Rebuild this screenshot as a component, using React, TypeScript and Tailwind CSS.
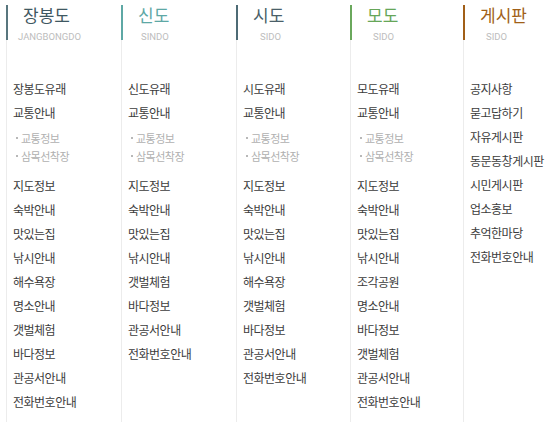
import React from 'react';

type Column = {
  title: string;
  sub: string;
  titleClass: string;
  borderClass: string;
  subPad: string;
  width: string;
  top: string[];
  rest: string[];
};

const columns: Column[] = [
  {
    title: '장봉도',
    sub: 'JANGBONGDO',
    titleClass: 'text-[#3f5862]',
    borderClass: 'border-[#58767e]',
    subPad: 'pl-[10px]',
    width: 'w-[115px]',
    top: ['장봉도유래', '교통안내'],
    rest: ['지도정보', '숙박안내', '맛있는집', '낚시안내', '해수욕장', '명소안내', '갯벌체험', '바다정보', '관공서안내', '전화번호안내'],
  },
  {
    title: '신도',
    sub: 'SINDO',
    titleClass: 'text-[#5ea8a5]',
    borderClass: 'border-[#5ea8a5]',
    subPad: 'pl-[18px]',
    width: 'w-[115px]',
    top: ['신도유래', '교통안내'],
    rest: ['지도정보', '숙박안내', '맛있는집', '낚시안내', '갯벌체험', '바다정보', '관공서안내', '전화번호안내'],
  },
  {
    title: '시도',
    sub: 'SIDO',
    titleClass: 'text-[#4a5f69]',
    borderClass: 'border-[#4d6b75]',
    subPad: 'pl-[22px]',
    width: 'w-[114px]',
    top: ['시도유래', '교통안내'],
    rest: ['지도정보', '숙박안내', '맛있는집', '낚시안내', '해수욕장', '갯벌체험', '바다정보', '관공서안내', '전화번호안내'],
  },
  {
    title: '모도',
    sub: 'SIDO',
    titleClass: 'text-[#66a658]',
    borderClass: 'border-[#6aa85c]',
    subPad: 'pl-[21px]',
    width: 'w-[113px]',
    top: ['모도유래', '교통안내'],
    rest: ['지도정보', '숙박안내', '맛있는집', '낚시안내', '조각공원', '명소안내', '바다정보', '갯벌체험', '관공서안내', '전화번호안내'],
  },
  {
    title: '게시판',
    sub: 'SIDO',
    titleClass: 'text-[#a15f18]',
    borderClass: 'border-[#a15f18]',
    subPad: 'pl-[21px]',
    width: 'flex-1',
    top: [],
    rest: ['공지사항', '묻고답하기', '자유게시판', '동문동창게시판', '시민게시판', '업소홍보', '추억한마당', '전화번호안내'],
  },
];

const subItems = ['교통정보', '삼목선착장'];

export default function App() {
  return (
    <div
      className="flex h-[422px] w-[545px] overflow-hidden bg-white pl-[6px] pt-[5px]"
      style={{ fontFamily: '"Noto Sans CJK KR", "Noto Sans", sans-serif' }}
    >
      {columns.map((col) => (
        <div key={col.title} className={`flex min-w-0 flex-col ${col.width}`}>
          {/* header */}
          <div className={`h-[35px] border-l-2 ${col.borderClass}`}>
            <div className={`pl-[15px] text-[17px] leading-[20px] ${col.titleClass}`}>{col.title}</div>
            <div
              className={`${col.subPad} mt-[6px] text-[9.5px] leading-[12px] text-[#bdbdbd]`}
              style={{ fontFamily: 'Roboto, "Noto Sans", sans-serif' }}
            >
              {col.sub}
            </div>
          </div>

          {/* menu */}
          <div className="flex-1 whitespace-nowrap border-l border-[#ececec] pl-[6px] pt-[37px] text-[12px] tracking-[-0.5px] text-[#3c3c3c]">
            {col.top.length > 0 && (
              <>
                {col.top.map((t) => (
                  <div key={t} className="h-[24px] leading-[24px]">{t}</div>
                ))}
                <div className="mb-[9px] mt-[4px]">
                  {subItems.map((s) => (
                    <div key={s} className="flex h-[18px] items-center pl-[3px] text-[11px] text-[#b0b0b0]">
                      <span className="mr-[3px] inline-block h-[2px] w-[2px] bg-[#b8b8b8]" />
                      {s}
                    </div>
                  ))}
                </div>
              </>
            )}
            {col.rest.map((t, i) => (
              <div key={t + i} className="h-[24px] leading-[24px]">{t}</div>
            ))}
          </div>
        </div>
      ))}
    </div>
  );
}
